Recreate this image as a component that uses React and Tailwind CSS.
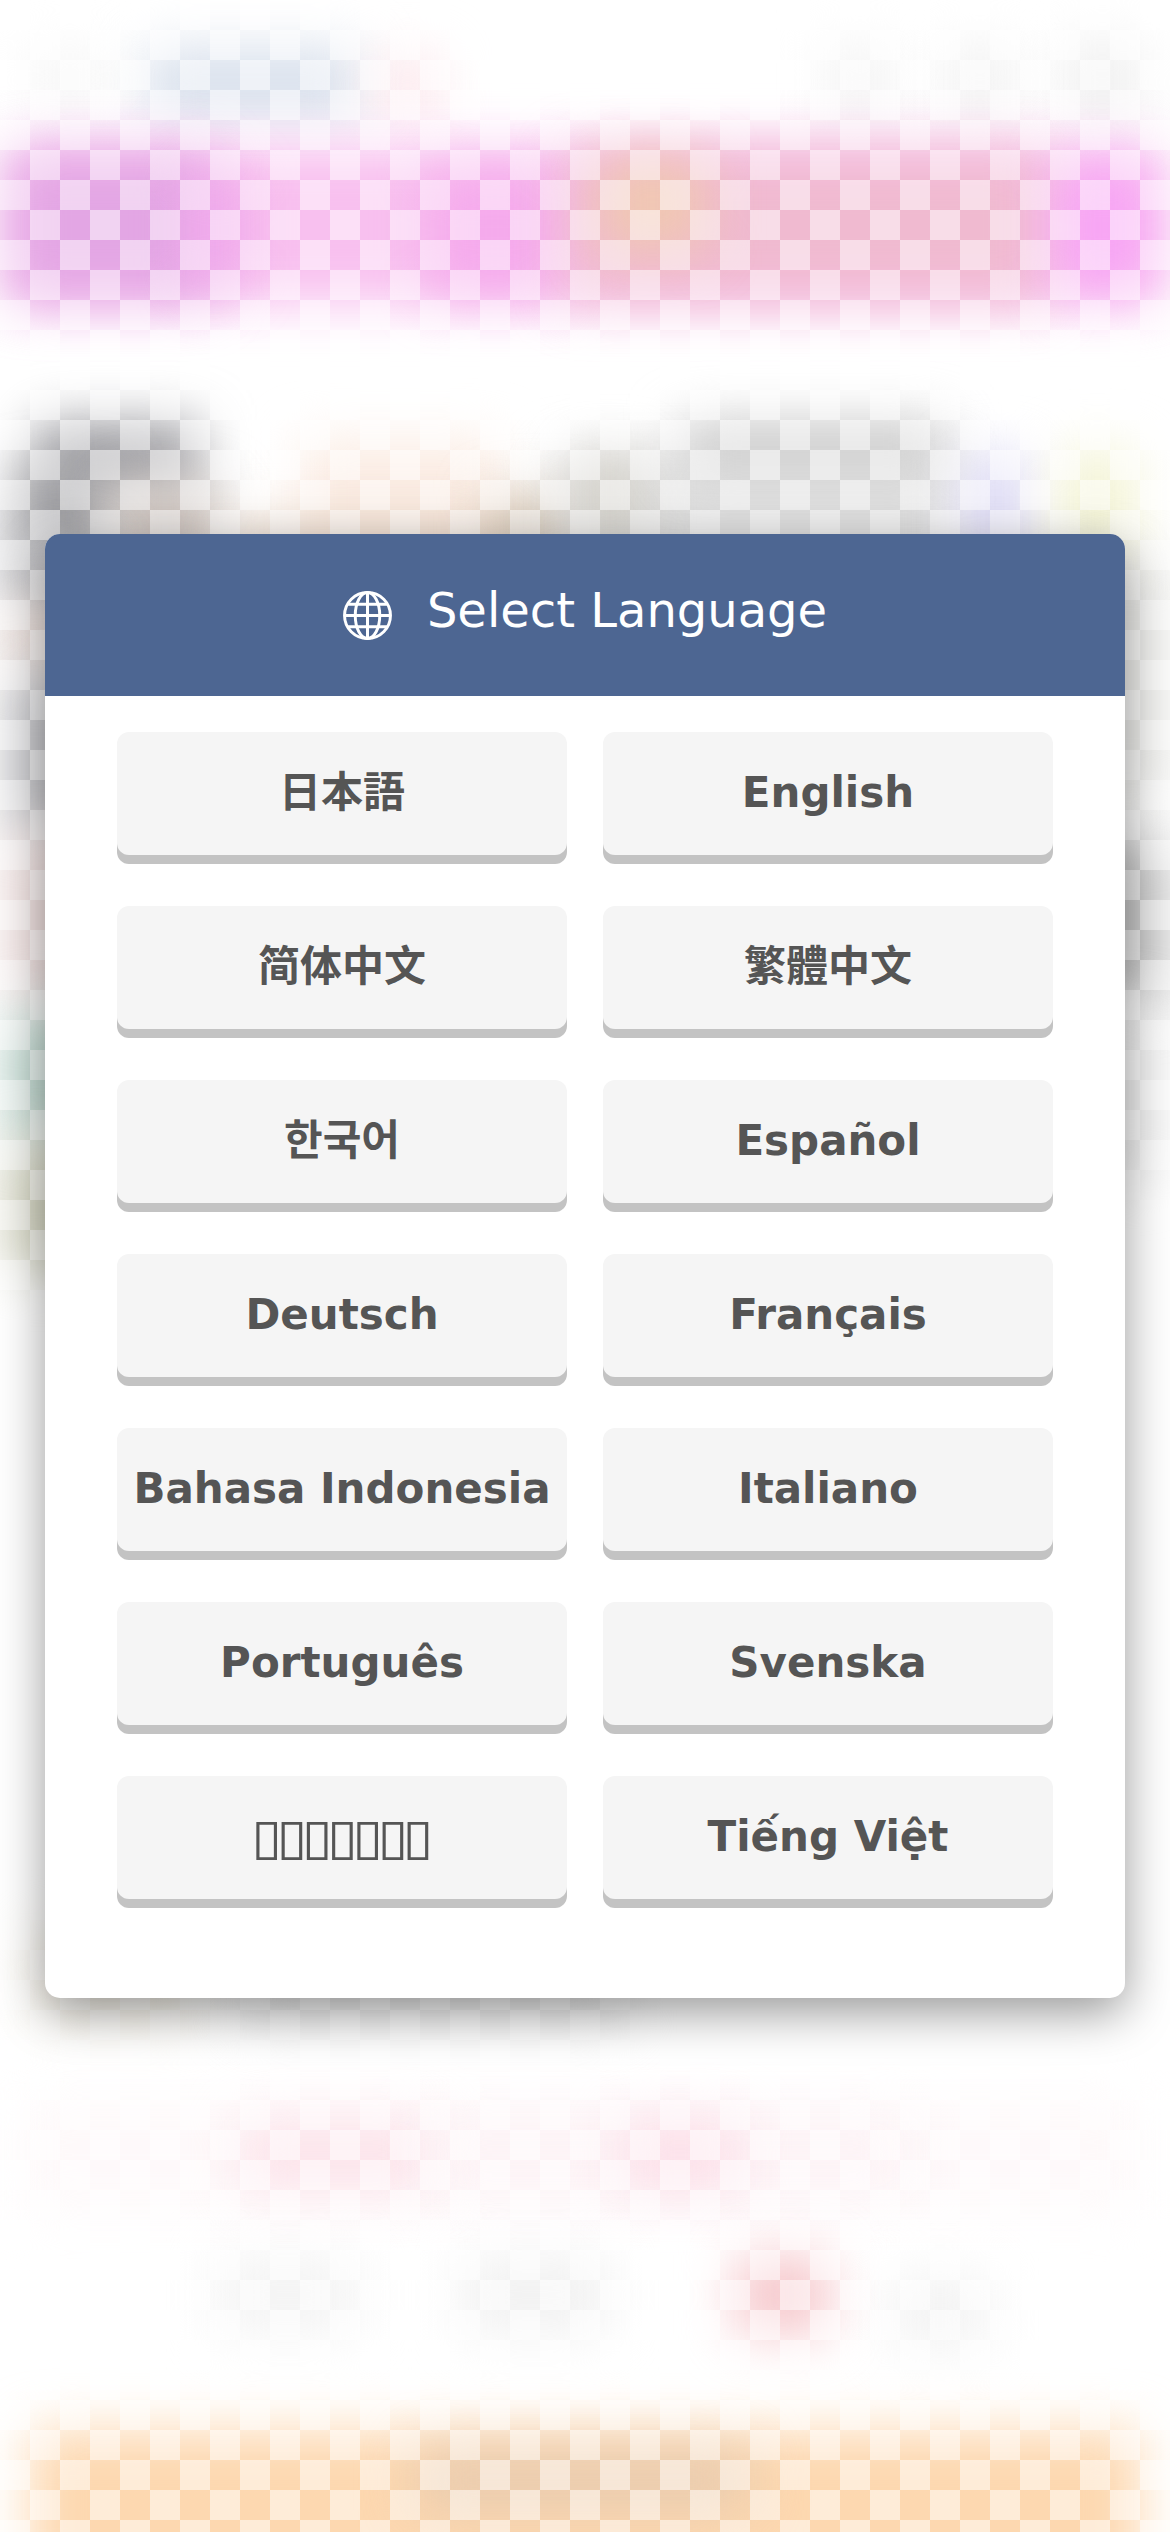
const languages = [
  { label: "日本語", lang: "ja" },
  { label: "English", lang: "en" },
  { label: "简体中文", lang: "zh-Hans" },
  { label: "繁體中文", lang: "zh-Hant" },
  { label: "한국어", lang: "ko" },
  { label: "Español", lang: "es" },
  { label: "Deutsch", lang: "de" },
  { label: "Français", lang: "fr" },
  { label: "Bahasa Indonesia", lang: "id" },
  { label: "Italiano", lang: "it" },
  { label: "Português", lang: "pt" },
  { label: "Svenska", lang: "sv" },
  {
    label: "▯▯▯▯▯▯▯",
    lang: "th",
    className: "text-[50px] font-normal tracking-[-5px] scale-x-[1.12] -translate-x-[2px]",
  },
  { label: "Tiếng Việt", lang: "vi" },
];

// Soft colour patches behind the dialog.
const patches = [
  "left-[145px] top-[48px] w-[215px] h-[72px] bg-[#d8e0ec]",
  "left-[375px] top-[55px] w-[65px] h-[60px] bg-[#fce6eb]",
  "left-[30px] top-[50px] w-[80px] h-[60px] bg-[#f6f6f6]",
  "left-[825px] top-[45px] w-[70px] h-[75px] bg-[#f4f4f4]",
  "left-[945px] top-[45px] w-[70px] h-[75px] bg-[#f2f2f2]",
  "left-[1065px] top-[40px] w-[75px] h-[85px] bg-[#f0f0f0]",

  "left-[8px] top-[145px] w-[1154px] h-[160px] bg-[#f8c0ef]",
  "left-[10px] top-[153px] w-[200px] h-[147px] bg-[#e3a6e4]",
  "left-[190px] top-[175px] w-[50px] h-[110px] bg-[#f0a6ec]",
  "left-[430px] top-[170px] w-[130px] h-[125px] bg-[#f5aaec]",
  "left-[565px] top-[152px] w-[480px] h-[148px] bg-[#f0bad0]",
  "left-[600px] top-[160px] w-[105px] h-[90px] bg-[#f0c8b2]",
  "left-[1060px] top-[165px] w-[90px] h-[125px] bg-[#f7a4f4]",

  "left-[35px] top-[422px] w-[165px] h-[70px] bg-[#9c9ca1]",
  "left-[15px] top-[470px] w-[95px] h-[95px] bg-[#949498]",
  "left-[110px] top-[485px] w-[110px] h-[85px] bg-[#c8beb8]",
  "left-[300px] top-[440px] w-[200px] h-[130px] bg-[#fbece3]",
  "left-[230px] top-[520px] w-[280px] h-[50px] bg-[#eedccd]",
  "left-[490px] top-[495px] w-[100px] h-[75px] bg-[#d3c3b0]",
  "left-[555px] top-[455px] w-[400px] h-[125px] bg-[#dfdfdf]",
  "left-[580px] top-[455px] w-[60px] h-[90px] bg-[#d3d0c8]",
  "left-[680px] top-[422px] w-[265px] h-[50px] bg-[#c8c8c8]",
  "left-[965px] top-[455px] w-[60px] h-[115px] bg-[#d9d6f3]",
  "left-[1060px] top-[450px] w-[75px] h-[120px] bg-[#f3f3d4]",

  "left-[5px] top-[540px] w-[100px] h-[70px] bg-[#bcbcc0]",
  "left-[5px] top-[610px] w-[100px] h-[60px] bg-[#e6d6d0]",
  "left-[5px] top-[675px] w-[100px] h-[160px] bg-[#c2c2c6]",
  "left-[5px] top-[835px] w-[100px] h-[165px] bg-[#ecdcdb]",
  "left-[5px] top-[1015px] w-[100px] h-[125px] bg-[#bdd6cd]",
  "left-[5px] top-[1145px] w-[100px] h-[125px] bg-[#d2d3bf]",
  "left-[1090px] top-[560px] w-[75px] h-[240px] bg-[#e8e8e5]",
  "left-[1070px] top-[840px] w-[95px] h-[165px] bg-[#bfbfbf]",
  "left-[1080px] top-[1000px] w-[80px] h-[180px] bg-[#eaeaea]",

  "left-[30px] top-[1930px] w-[165px] h-[95px] bg-[#f5f1e7]",
  "left-[240px] top-[1930px] w-[385px] h-[95px] bg-[#e7e7e7]",

  "left-[20px] top-[2100px] w-[1120px] h-[110px] bg-[#fef9fa]",
  "left-[240px] top-[2120px] w-[195px] h-[70px] bg-[#fce3ea]",
  "left-[430px] top-[2120px] w-[480px] h-[70px] bg-[#fdf3f6]",
  "left-[620px] top-[2120px] w-[120px] h-[70px] bg-[#fce0e9]",
  "left-[215px] top-[2255px] w-[145px] h-[80px] bg-[#f4f4f4]",
  "left-[460px] top-[2255px] w-[150px] h-[80px] bg-[#f2f2f2]",
  "left-[735px] top-[2255px] w-[95px] h-[80px] bg-[#f6c8cc]",
  "left-[890px] top-[2275px] w-[100px] h-[75px] bg-[#f3f3f3]",

  "left-[30px] top-[2430px] w-[1110px] h-[160px] bg-[#fdd8b0]",
  "left-[415px] top-[2450px] w-[335px] h-[60px] bg-[#e8cbaf]",
];

function GlobeIcon() {
  return (
    <svg
      className="size-[49px] shrink-0"
      viewBox="0 0 48 48"
      fill="none"
      stroke="currentColor"
      strokeWidth="2.9"
      aria-hidden="true"
    >
      <circle cx="24" cy="24" r="22.5" />
      <ellipse cx="24" cy="24" rx="12" ry="22.5" />
      <path d="M24 1.5v45M1.5 24h45M5 13h38M5 35h38" />
    </svg>
  );
}

function Backdrop() {
  return (
    <div className="absolute inset-0 overflow-hidden bg-white" aria-hidden="true">
      {patches.map((patch) => (
        <div key={patch} className={`absolute blur-[26px] ${patch}`} />
      ))}
      <div className="absolute inset-0 bg-[repeating-conic-gradient(transparent_0_25%,rgba(255,255,255,0.5)_0_50%)] bg-[length:60px_60px]" />
    </div>
  );
}

export default function App() {
  return (
    <div className="relative flex h-[2532px] w-full items-center justify-center overflow-hidden font-['DejaVu_Sans','Noto_Sans_CJK_TC',sans-serif]">
      <Backdrop />
      <section className="relative w-[1080px] overflow-hidden rounded-[15px] bg-white shadow-[0_15px_48px_rgba(0,0,0,0.4)]">
        <header className="flex h-[162px] items-center justify-center bg-[#4d6692] text-white">
          <GlobeIcon />
          <h1 className="ml-[35px] mt-[-11px] text-[48px] leading-[72px]">Select Language</h1>
        </header>
        <div className="grid grid-cols-2 gap-x-9 gap-y-[51px] px-[72px] pt-9 pb-[99px]">
          {languages.map(({ label, lang, className = "" }) => (
            <button
              key={lang}
              lang={lang}
              type="button"
              className="flex h-[123px] items-center justify-center rounded-[12px] bg-[#f5f5f5] pb-[2px] text-[42px] font-bold leading-[60px] whitespace-nowrap text-[#555] shadow-[0_9px_0_#c3c3c3]"
            >
              <span className={className}>{label}</span>
            </button>
          ))}
        </div>
      </section>
    </div>
  );
}
